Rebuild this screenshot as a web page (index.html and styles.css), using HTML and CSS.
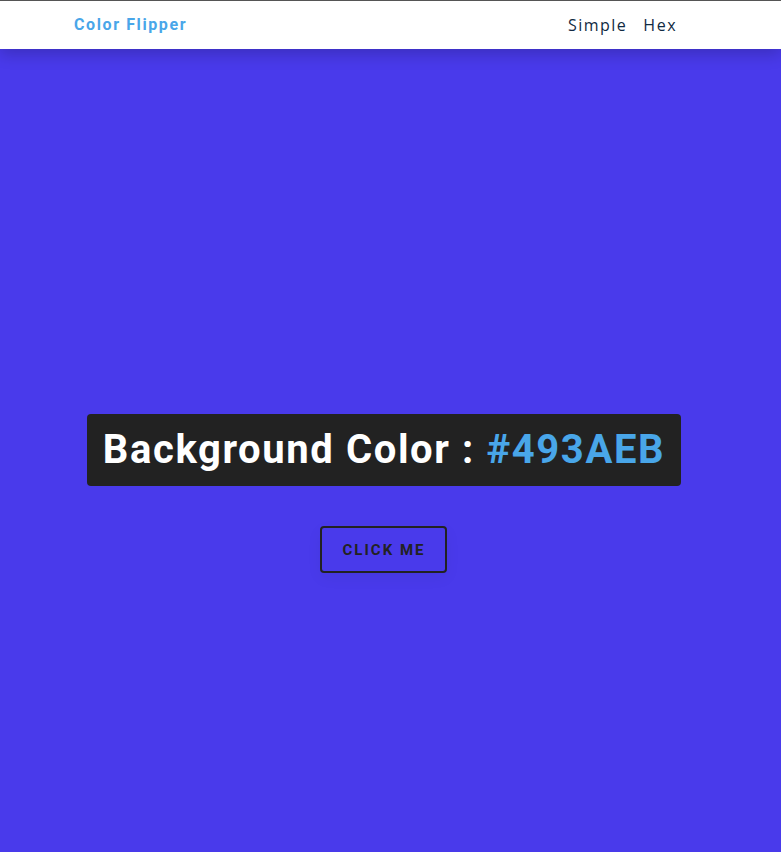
FILE: index.html
```
<!DOCTYPE html>
<html lang="en">
<head>
<meta charset="UTF-8">
<title>Color Flipper</title>
<link rel="stylesheet" href="styles.css">
</head>
<body>
<nav class="nav">
  <div class="nav-center">
    <span class="logo">Color Flipper</span>
    <ul class="nav-links">
      <li><a href="#">Simple</a></li>
      <li><a href="#">Hex</a></li>
    </ul>
  </div>
</nav>
<main class="main">
  <div class="container">
    <h2 class="title">Background Color : <span class="color">#493AEB</span></h2>
    <button class="btn-hero">click me</button>
  </div>
</main>
</body>
</html>
```
FILE: styles.css
```
* { box-sizing: border-box; margin: 0; padding: 0; }
html, body { height: 100%; }
body {
  font-family: Roboto, "Open Sans", sans-serif;
  background: #493AEB;
  border-top: 1px solid #555;
  display: flex;
  flex-direction: column;
  overflow: hidden;
}
.nav {
  background: #fff;
  box-shadow: 0 5px 15px rgba(0, 0, 0, 0.2);
  position: relative;
  z-index: 1;
}
.nav-center {
  height: 48px;
  display: flex;
  align-items: center;
  justify-content: space-between;
  padding: 0 104px 0 74px;
}
.logo {
  font-family: Roboto, sans-serif;
  font-weight: 700;
  font-size: 16px;
  letter-spacing: 1.6px;
  color: #49a6e9;
  margin-top: -1px;
}
.nav-links {
  list-style: none;
  display: flex;
  gap: 16px;
  margin-top: -1px;
}
.nav-links a {
  font-family: "Open Sans", sans-serif;
  font-size: 16px;
  letter-spacing: 1.5px;
  color: #102a42;
  text-decoration: none;
}
.main {
  flex: 1;
  display: flex;
  justify-content: center;
  padding-right: 13px;
}
.container {
  padding-top: 365px;
  display: flex;
  flex-direction: column;
  align-items: center;
}
.title {
  background: #222;
  color: #fff;
  font-family: Roboto, sans-serif;
  font-weight: 700;
  font-size: 40px;
  line-height: 48px;
  letter-spacing: 1.6px;
  padding: 12px 16px;
  border-radius: 4px;
  margin-bottom: 40px;
}
.color { color: #49a6e9; }
.btn-hero {
  font-family: Roboto, sans-serif;
  text-transform: uppercase;
  background: transparent;
  color: #222;
  letter-spacing: 2px;
  font-weight: 700;
  font-size: 15px;
  padding: 12px 18px;
  border: 2px solid #222;
  border-radius: 4px;
  width: 127px;
  height: 47px;
  box-shadow: 0 5px 15px rgba(0, 0, 0, 0.05);
}
```
